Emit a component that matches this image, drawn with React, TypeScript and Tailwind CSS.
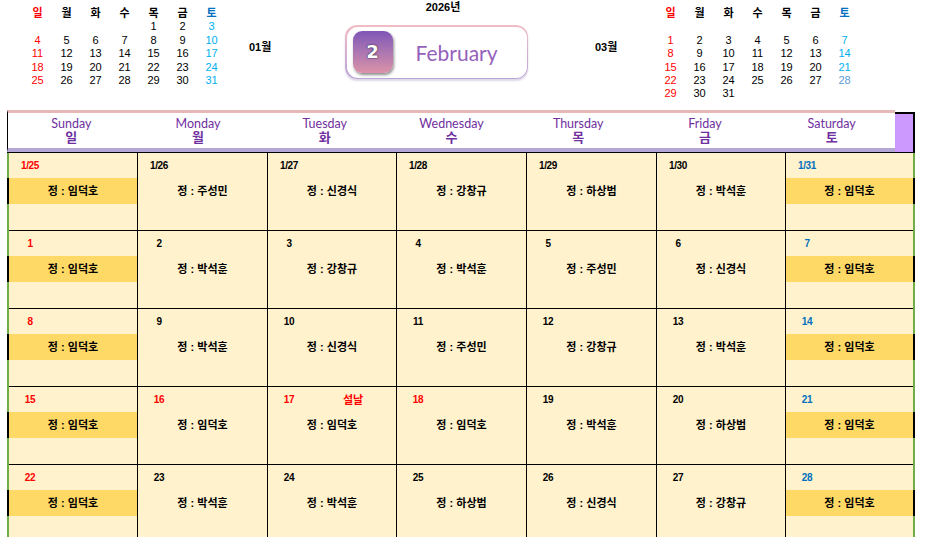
import React from 'react';

const FONT = "font-['Liberation_Sans','Noto_Sans_CJK_KR',sans-serif]";

type Day = { d: string; name: string; color?: string; note?: string };

const RED = 'text-[#ff0000]';
const BLUE = 'text-[#0070c0]';

const weeks: Day[][] = [
  [
    { d: '1/25', name: '임덕호' },
    { d: '1/26', name: '주성민' },
    { d: '1/27', name: '신경식' },
    { d: '1/28', name: '강창규' },
    { d: '1/29', name: '하상범' },
    { d: '1/30', name: '박석훈' },
    { d: '1/31', name: '임덕호' },
  ],
  [
    { d: '1', name: '임덕호' },
    { d: '2', name: '박석훈' },
    { d: '3', name: '강창규' },
    { d: '4', name: '박석훈' },
    { d: '5', name: '주성민' },
    { d: '6', name: '신경식' },
    { d: '7', name: '임덕호' },
  ],
  [
    { d: '8', name: '임덕호' },
    { d: '9', name: '박석훈' },
    { d: '10', name: '신경식' },
    { d: '11', name: '주성민' },
    { d: '12', name: '강창규' },
    { d: '13', name: '박석훈' },
    { d: '14', name: '임덕호' },
  ],
  [
    { d: '15', name: '임덕호' },
    { d: '16', name: '임덕호', color: RED },
    { d: '17', name: '임덕호', color: RED, note: '설날' },
    { d: '18', name: '임덕호', color: RED },
    { d: '19', name: '박석훈' },
    { d: '20', name: '하상범' },
    { d: '21', name: '임덕호' },
  ],
  [
    { d: '22', name: '임덕호' },
    { d: '23', name: '박석훈' },
    { d: '24', name: '박석훈' },
    { d: '25', name: '하상범' },
    { d: '26', name: '신경식' },
    { d: '27', name: '강창규' },
    { d: '28', name: '임덕호' },
  ],
];

const heads = [
  ['Sunday', '일'],
  ['Monday', '월'],
  ['Tuesday', '화'],
  ['Wednesday', '수'],
  ['Thursday', '목'],
  ['Friday', '금'],
  ['Saturday', '토'],
];

const dayNames = ['일', '월', '화', '수', '목', '금', '토'];

// mini calendar rows, null = empty slot
const jan: (number | null)[][] = [
  [null, null, null, null, 1, 2, 3],
  [4, 5, 6, 7, 8, 9, 10],
  [11, 12, 13, 14, 15, 16, 17],
  [18, 19, 20, 21, 22, 23, 24],
  [25, 26, 27, 28, 29, 30, 31],
];
const mar: (number | null)[][] = [
  [null, null, null, null, null, null, null],
  [1, 2, 3, 4, 5, 6, 7],
  [8, 9, 10, 11, 12, 13, 14],
  [15, 16, 17, 18, 19, 20, 21],
  [22, 23, 24, 25, 26, 27, 28],
  [29, 30, 31, null, null, null, null],
];

const MiniCal: React.FC<{ rows: (number | null)[][] }> = ({ rows }) => (
  <div className="mt-[7px] w-[203px] grid grid-cols-7 auto-rows-[13.4px] text-[11px] leading-[13.4px] text-center">
    {dayNames.map((n, i) => (
      <div
        key={n}
        className={`font-bold ${i === 0 ? 'text-[#ff0000]' : i === 6 ? 'text-[#0070c0]' : 'text-black'}`}
      >
        {n}
      </div>
    ))}
    {rows.flat().map((v, i) => (
      <div
        key={i}
        className={
          i % 7 === 0
            ? 'text-[#ff0000]'
            : i % 7 === 6
            ? v === 28
              ? 'text-[#5b9bd5]'
              : 'text-[#00b0f0]'
            : 'text-black'
        }
      >
        {v ?? ''}
      </div>
    ))}
  </div>
);

const MonthBadge = () => (
  <div className="w-[183px] h-[54px] rounded-[12px] p-[1.5px] bg-gradient-to-b from-[#f3bcc5] to-[#b9a4d8] shadow-[0_2px_2px_rgba(120,100,150,0.25)]">
    <div className="h-full w-full rounded-[11px] bg-white flex items-center pl-[6px]">
      <div className="w-[40px] h-[42px] rounded-[9px] bg-gradient-to-b from-[#7f56b6] to-[#dc92a7] shadow-[1px_2px_3px_rgba(0,0,0,0.45)] flex items-center justify-center">
        <span className="text-white text-[18px] font-bold leading-none [text-shadow:0_0_2px_#3a2a4a,0_0_1px_#3a2a4a] font-['DejaVu_Sans',sans-serif]">
          2
        </span>
      </div>
      <span className="ml-[23px] text-[#9561bb] text-[21px] leading-none font-['Lato',sans-serif]">
        February
      </span>
    </div>
  </div>
);

const SideBorder: React.FC<{ band: boolean }> = ({ band }) => (
  <div className="w-[2px] flex flex-col">
    <div className="h-[25px] bg-[#70ad47]" />
    <div className={`h-[26px] ${band ? 'bg-black' : 'bg-[#70ad47]'}`} />
    <div className="flex-1 bg-[#70ad47]" />
  </div>
);

const Cell: React.FC<{ day: Day; col: number }> = ({ day, col }) => {
  const weekend = col === 0 || col === 6;
  const color = day.color ?? (col === 0 ? RED : col === 6 ? BLUE : 'text-black');
  return (
    <div className={`h-[78px] border-b border-black bg-[#fff2cc] ${col < 6 ? 'border-r' : ''}`}>
      <div className="pt-[7px] h-[19px] flex items-center">
        <div className={`ml-[8px] w-[26px] text-center text-[10px] font-bold leading-[12px] tracking-[-0.4px] ${color}`}>
          {day.d}
        </div>
        {day.note && (
          <div className="ml-[41px] text-[11px] font-bold leading-[12px] text-[#ff0000]">{day.note}</div>
        )}
      </div>
      <div
        className={`mt-[6px] h-[26px] flex items-center justify-center text-[11px] font-semibold text-black ${
          weekend ? 'bg-[#ffd966]' : ''
        }`}
      >
        정 : {day.name}
      </div>
    </div>
  );
};

export default function App() {
  return (
    <div className={`w-[925px] h-[537px] overflow-hidden bg-white ${FONT}`}>
      {/* top: mini calendars and month title */}
      <div className="flex h-[110px]">
        <div className="ml-[23px]">
          <MiniCal rows={jan} />
        </div>
        <div className="w-[430px]">
          <div className="pt-[1px] pl-[4px] text-center text-[11px] font-bold leading-[13px]">2026년</div>
          <div className="mt-[11px] flex items-start">
            <div className="w-[119px] pl-[23px] pt-[16px] text-[11px] font-bold leading-[12px]">01월</div>
            <MonthBadge />
            <div className="pl-[67px] pt-[16px] text-[11px] font-bold leading-[12px]">03월</div>
          </div>
        </div>
        <MiniCal rows={mar} />
      </div>

      {/* calendar table */}
      <div className="ml-[7px] w-[908px]">
        <div className="flex h-[42px]">
          <div className="w-[888px] border-l border-l-black border-t-[3px] border-t-[#e6b8b7] border-b-[4px] border-b-[#b4a7d6] bg-white grid grid-cols-7">
            {heads.map(([en, ko]) => (
              <div key={en} className="flex flex-col items-center justify-center text-[#7030a0]">
                <div className="h-[13px] text-[12.5px] leading-[13px] font-['Lato',sans-serif]">{en}</div>
                <div className="h-[14px] text-[13px] leading-[14px] font-semibold font-['Noto_Sans_CJK_KR',sans-serif]">
                  {ko}
                </div>
              </div>
            ))}
          </div>
          <div className="w-[20px] mt-[2px] bg-[#cc99ff] border-t-2 border-r-2 border-black" />
        </div>
        <div className="border-t border-black">
          {weeks.map((w, r) => (
            <div key={r} className="flex">
              <SideBorder band />
              <div className="grid grid-cols-[129px_130px_129px_130px_130px_129px_127px]">
                {w.map((day, c) => (
                  <Cell key={c} day={day} col={c} />
                ))}
              </div>
              <SideBorder band />
            </div>
          ))}
        </div>
      </div>
    </div>
  );
}
